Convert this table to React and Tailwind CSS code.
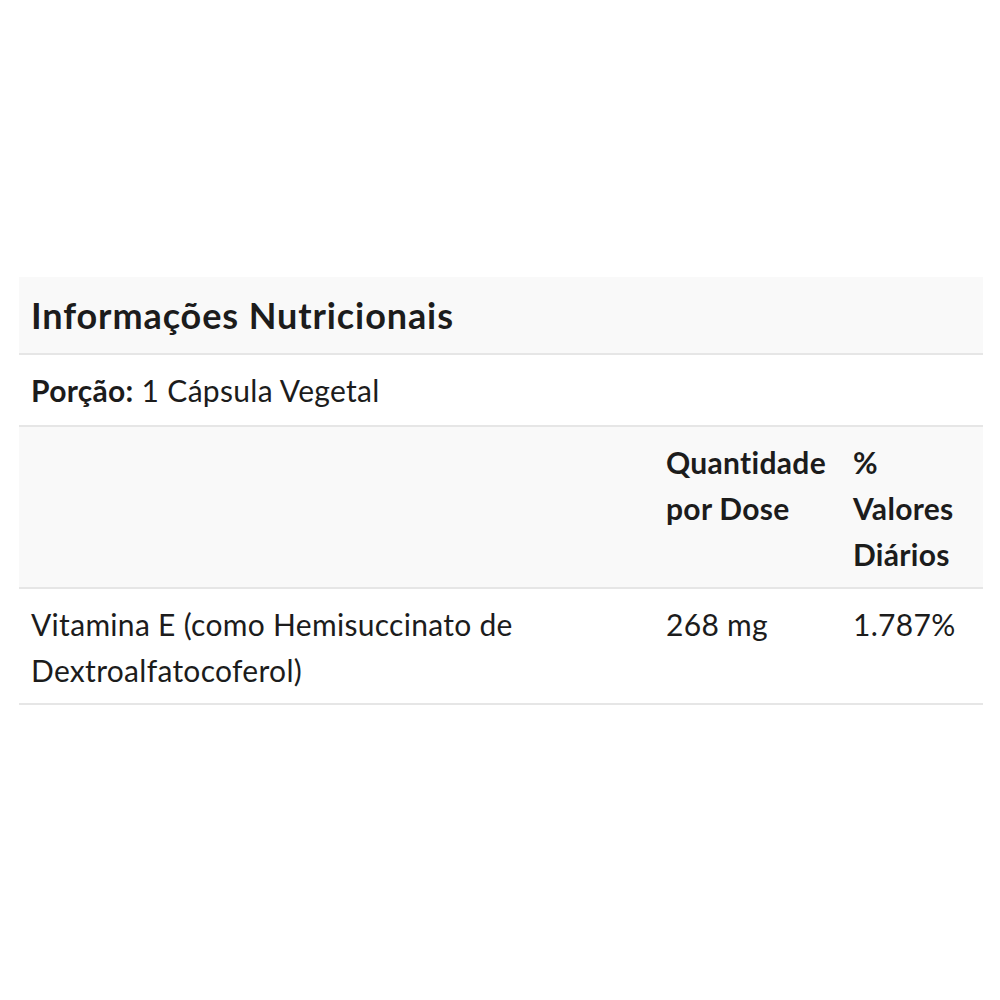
export default function App() {
  return (
    <div className="w-[1000px] h-[1000px] bg-white pt-[277px] px-[19px]" style={{ fontFamily: "Lato, 'Noto Sans', sans-serif" }}>
      <table className="w-[964px] table-fixed border-collapse text-[#1c1c1c]">
        <colgroup>
          <col className="w-[635px]" />
          <col className="w-[187px]" />
          <col className="w-[142px]" />
        </colgroup>
        <tbody>
          <tr className="bg-[#f9f9f9] border-b-2 border-[#e6e6e6]">
            <td colSpan={3} className="px-3 py-3 text-[36px] tracking-[0.9px] leading-[52px] font-bold">Informações Nutricionais</td>
          </tr>
          <tr className="bg-white border-b-2 border-[#e6e6e6]">
            <td colSpan={3} className="px-3 py-3 text-[30px] tracking-[0.3px] leading-[46px]"><span className="font-bold">Porção:</span> 1 Cápsula Vegetal</td>
          </tr>
          <tr className="bg-[#f9f9f9] border-b-2 border-[#e6e6e6] align-top">
            <td className="px-3 pt-3 pb-[10px]"></td>
            <td className="px-3 pt-3 pb-[10px] text-[30px] tracking-[0.3px] leading-[46px] font-bold">Quantidade por Dose</td>
            <td className="px-3 pt-3 pb-[10px] text-[30px] tracking-[0.3px] leading-[46px] font-bold">% Valores Diários</td>
          </tr>
          <tr className="bg-white border-b-2 border-[#e6e6e6] align-top">
            <td className="px-3 pt-3 pb-[10px] text-[30px] tracking-[0.3px] leading-[46px]">Vitamina E (como Hemisuccinato de Dextroalfatocoferol)</td>
            <td className="px-3 pt-3 pb-[10px] text-[30px] tracking-[0.3px] leading-[46px]">268 mg</td>
            <td className="px-3 pt-3 pb-[10px] text-[30px] tracking-[0.3px] leading-[46px]">1.787%</td>
          </tr>
        </tbody>
      </table>
    </div>
  );
}
